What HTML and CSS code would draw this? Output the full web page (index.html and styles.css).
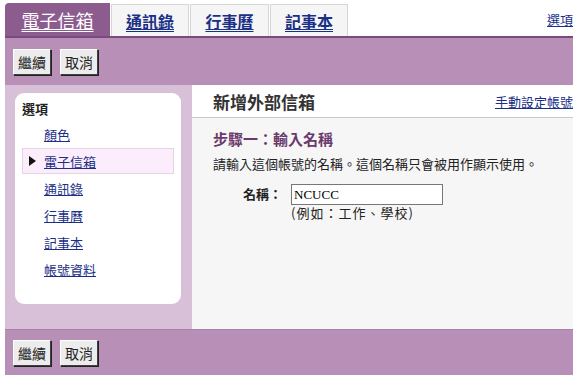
FILE: index.html
```html
<!DOCTYPE html>
<html lang="zh-Hant">
<head>
    <meta charset="UTF-8">
    <title>新增外部信箱</title>
    <link rel="stylesheet" href="styles.css">
</head>
<body>
    <div class="page">
        <div class="tabs">
            <a class="tab active" href="#"><span>電子信箱</span></a>
            <a class="tab" href="#"><span>通訊錄</span></a>
            <a class="tab" href="#"><span>行事曆</span></a>
            <a class="tab" href="#"><span>記事本</span></a>
            <a class="options-link" href="#">選項</a>
        </div>

        <div class="toolbar top">
            <button class="btn">繼續</button>
            <button class="btn">取消</button>
        </div>

        <div class="content">
            <div class="side">
                <div class="side-box">
                    <div class="side-title">選項</div>
                    <ul class="side-menu">
                        <li><a href="#">顏色</a></li>
                        <li class="current"><a href="#">電子信箱</a></li>
                        <li><a href="#">通訊錄</a></li>
                        <li><a href="#">行事曆</a></li>
                        <li><a href="#">記事本</a></li>
                        <li><a href="#">帳號資料</a></li>
                    </ul>
                </div>
            </div>

            <div class="main">
                <div class="main-head">
                    <h2>新增外部信箱</h2>
                    <a href="#">手動設定帳號</a>
                </div>
                <div class="main-body">
                    <h3>步驟一：輸入名稱</h3>
                    <p>請輸入這個帳號的名稱。這個名稱只會被用作顯示使用。</p>
                    <div class="field">
                        <label>名稱：</label>
                        <div>
                            <input type="text" value="NCUCC">
                            <div class="hint">(例如：工作、學校)</div>
                        </div>
                    </div>
                </div>
            </div>
        </div>

        <div class="toolbar bottom">
            <button class="btn">繼續</button>
            <button class="btn">取消</button>
        </div>
    </div>
</body>
</html>
```

FILE: styles.css
```css
body {
    margin: 0;
    background-color: #fff;
    font-family: "Noto Sans CJK TC", "Liberation Sans", sans-serif;
    font-size: 13px;
    color: #222;
}
a {
    color: #1a2f86;
}
.page {
    margin-left: 5px;
    width: 568px;
}

/* tabs */
.tabs {
    display: flex;
    align-items: flex-end;
    height: 36px;
}
.tab {
    display: flex;
    align-items: center;
    justify-content: center;
    height: 31px;
    margin-right: 1px;
    background-color: #f5f5f5;
    border: 1px solid #d6d6d6;
    border-bottom: none;
    font-size: 16px;
    font-weight: bold;
    line-height: 1;
}
.tab span {
    text-decoration: underline;
    text-underline-offset: 3px;
}
.tab:nth-child(2) { width: 76px; }
.tab:nth-child(3) { width: 77px; }
.tab:nth-child(4) { width: 76px; }
.tab.active {
    width: 105px;
    height: 33px;
    background-color: #8d5c8f;
    border: none;
    border-radius: 4px 0 0 0;
    color: #fff;
    font-size: 18px;
    font-weight: normal;
}
.options-link {
    margin-left: auto;
    align-self: center;
    margin-top: 2px;
    font-size: 13px;
}

/* toolbars */
.toolbar {
    display: flex;
    align-items: center;
    gap: 9px;
    padding-left: 8px;
    background-color: #b78fb7;
}
.toolbar.top {
    height: 47px;
    border-top: 2px solid #7b4a7d;
}
.toolbar.bottom {
    height: 45px;
    border-top: 1px solid #a980a9;
}
.btn {
    height: 26px;
    padding: 0 4px;
    background-color: #ececec;
    border: 1px solid;
    border-color: #fff #404040 #404040 #fff;
    box-shadow: 1px 1px 0 #222;
    font-family: "Noto Sans CJK TC", sans-serif;
    font-size: 14px;
    color: #222;
}

/* content */
.content {
    display: flex;
    height: 244px;
}
.side {
    width: 187px;
    padding: 8px 11px 0 10px;
    box-sizing: border-box;
    background-color: #d8c0d8;
}
.side-box {
    height: 204px;
    background-color: #fff;
    border-radius: 9px;
    padding: 7px 7px 0 7px;
}
.side-title {
    font-weight: bold;
    line-height: 18px;
}
.side-menu {
    list-style: none;
    margin: 3px 0 0 0;
    padding: 0;
}
.side-menu li {
    height: 26px;
    margin-bottom: 1px;
    padding-left: 21px;
    display: flex;
    align-items: center;
    box-sizing: border-box;
    border: 1px solid transparent;
    position: relative;
}
.side-menu li.current {
    background-color: #fcedfc;
    border-color: #e4d4e4;
}
.side-menu li.current::before {
    content: "";
    position: absolute;
    left: 6px;
    top: 7px;
    border-left: 7px solid #111;
    border-top: 5px solid transparent;
    border-bottom: 5px solid transparent;
}

.main {
    flex: 1;
    background-color: #f6f6f6;
}
.main-head {
    display: flex;
    align-items: center;
    justify-content: space-between;
    height: 32px;
    padding-left: 21px;
    background-color: #fff;
    border-bottom: 1px solid #c9c9c9;
}
.main-head h2 {
    margin: 0;
    font-size: 17px;
    color: #333;
}
.main-head a {
    font-size: 13px;
}
.main-body {
    padding: 11px 0 0 21px;
}
.main-body h3 {
    margin: 0;
    font-size: 15px;
    color: #6b3a6d;
    line-height: 20px;
}
.main-body p {
    margin: 6px 0 0 0;
    line-height: 18px;
}
.field {
    display: flex;
    gap: 9px;
    margin: 11px 0 0 30px;
}
.field label {
    font-weight: bold;
    line-height: 20px;
}
.field input {
    display: block;
    width: 146px;
    height: 17px;
    margin: 0;
    padding: 1px 2px;
    border: 1px solid #777;
    font-family: "Liberation Serif", serif;
    font-size: 13px;
}
.hint {
    line-height: 16px;
    letter-spacing: 1px;
}
```
